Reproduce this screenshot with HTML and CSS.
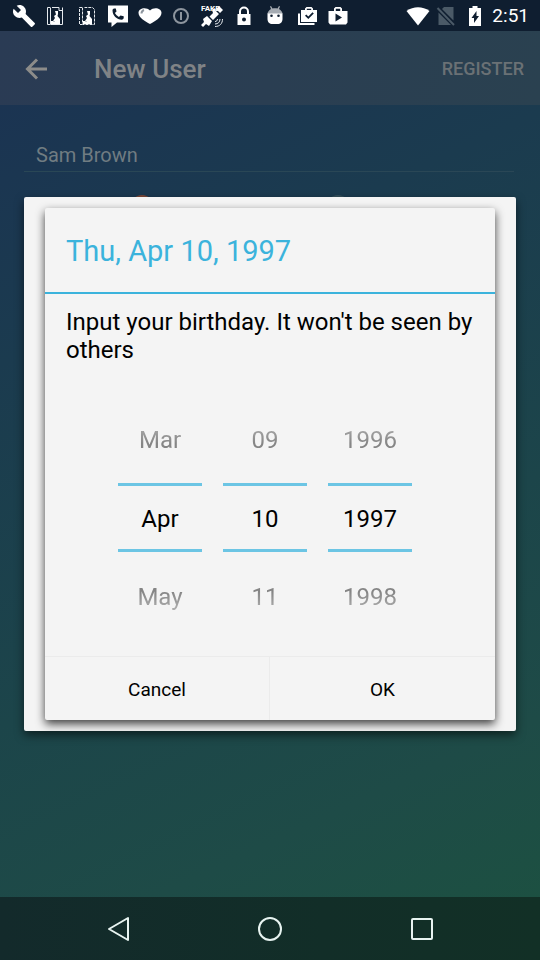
FILE: index.html
```html
<!DOCTYPE html>
<html lang="en">
<head>
<meta charset="utf-8">
<meta name="viewport" content="width=device-width, initial-scale=1">
<title>New User</title>
<link rel="stylesheet" href="styles.css">
</head>
<body>
<div class="screen">
  <div class="status">
    <div class="status-icons">
      <svg viewBox="0 0 24 24"><path d="M22.700 19l-9.100-9.100c.9-2.300.4-5-1.500-6.900-2-2-5-2.400-7.400-1.300L9 6 6 9 1.600 4.700C.4 7.100.9 10.100 2.900 12.100c1.900 1.900 4.600 2.400 6.900 1.500l9.100 9.100c.4.400 1 .4 1.400 0l2.300-2.300c.5-.4.5-1.100.1-1.400z"/></svg>
      <svg viewBox="0 0 24 24"><path class="line" d="M7 3.500H4.500v17H7M7.500 3.500v17h12v-17M9 3.500h7v3h3.500"/><path d="M12 7h3v3l-.5 2L17 15v5H9.500v-2H12l-2-1 2-3-1-2 2-1.500zM8 17h2.500v3H8z"/></svg>
      <svg viewBox="0 0 24 24"><path class="line dash" d="M7 3.500H4.500v17H7M7.500 3.500v17h12v-15l-2-2h-8"/><path d="M12 7h3v3l-.5 2L17 15v5H9.500v-2H12l-2-1 2-3-1-2 2-1.500zM8 17h2.500v3H8z"/></svg>
      <svg viewBox="0 0 24 24"><path fill-rule="evenodd" d="M2 1.500h20v17H11L5.500 23v-4.500H2zM7.800 4.500c-.7.500-1.300 1-1.300 1.800 0 5.200 4.200 9.400 9.400 9.400.7 0 1.300-.8 1.800-1.500v-2l-3.200-.8-1.600 1.600a9 9 0 0 1-4-4L10.500 7.500 9.800 4.500z"/></svg>
      <svg viewBox="0 0 24 24"><path d="M12 20C7 17.500.500 13.500.500 8.800c0-5 8-6.300 11.500-2.300 3.500-4 11.500-2.700 11.500 2.300C23.500 13.500 17 17.500 12 20z"/><path class="grey-line" d="M3.500 9.500c0-2 1-3 2.500-3.500"/></svg>
      <svg viewBox="0 0 24 24"><circle class="grey-line" cx="12" cy="12" r="7"/><path class="grey-line" d="M12 8v8"/></svg>
      <svg viewBox="0 0 24 24"><text class="fake" x="1" y="7">FAKE</text><path d="M16 5l3-3 4 4-3 3zM9.500 12.500l6-6 3.500 3.500-6 6zM3 15l4-3 5 5-3 5-3-2-3 3-2-2 3-3zM12 6l3-2 1 2-3 3z"/><path class="line" d="M15 17.500c1.500 0 2.500-1 2.500-2.500M15 20c3 0 5-2 5-5M15 22.500c5 0 7.500-3 7.500-7.500"/></svg>
      <svg viewBox="0 0 24 24"><path fill-rule="evenodd" d="M5.500 10H7V7.500a5 5 0 0 1 10 0V10h1.500v11h-13zM9 10h6V7.500a3 3 0 0 0-6 0zM12 13.500a2 2 0 1 0 0 4 2 2 0 0 0 0-4z"/></svg>
      <svg viewBox="0 0 24 24"><path class="grey" d="M4.500 10c0-2 1.500-4 3.500-5L7 2.500l1-.5 1.500 2.500c1.500-.5 3.500-.5 5 0L16 2l1 .5L16 5c2 1 3.500 3 3.500 5z"/><path fill-rule="evenodd" d="M4.500 9.500h15V15c0 3-2 5-5 5h-5c-3 0-5-2-5-5zM8.500 10.500a1.300 1.300 0 1 0 0 2.600 1.300 1.300 0 0 0 0-2.600zM15.500 10.500a1.300 1.300 0 1 0 0 2.600 1.300 1.300 0 0 0 0-2.600z"/></svg>
      <svg viewBox="0 0 24 24"><path fill-rule="evenodd" d="M6 6h4V4.500L11.500 3h5L18 4.500V6h4v12H6zM11.800 6h4.400V4.700h-4.400zM10 11.800l3.300 3.300 5.500-5.500-1.300-1.300-4.200 4.200-2-2z"/><path d="M3 9.500h2V19h14.500v2H3z"/></svg>
      <svg viewBox="0 0 24 24"><path fill-rule="evenodd" d="M2.500 7H8V4.500L9.500 3h5L16 4.500V7h5.500v11.500L20 20.500H4l-1.500-2zM9.800 7h4.400V4.800H9.800zM9.500 9.500v8l6.500-4z"/></svg>
    </div>
    <div class="status-right">
      <svg viewBox="0 0 24 24"><path d="M12 21.500L.500 7c7-5 16-5 23 0z"/></svg>
      <svg viewBox="0 0 24 24"><path class="dim" d="M10 3h9.500v13.500L8 5zM4.500 8.500L17 21H4.500z"/><path class="dim-line" d="M3.500 4l16.500 17"/></svg>
      <svg viewBox="0 0 24 24"><path fill-rule="evenodd" d="M9.500 2h5v2H18v18H6V4h3.500zM13.500 7L8.500 14H11v5l5-7h-2.500z"/></svg>
      <span class="clock">2:51</span>
    </div>
  </div>

  <main class="app" inert>
    <header class="appbar">
      <button class="back" type="button" aria-label="Back"><svg viewBox="0 0 24 24"><path d="M23 12H4M13 2.500L3.500 12l9.500 9.500"/></svg></button>
      <h1>New User</h1>
      <button class="register" type="button">REGISTER</button>
    </header>
    <form class="form">
      <input class="name" type="text" aria-label="Name" value="Sam Brown">
      <div class="radios">
        <input class="radio radio-on" type="radio" name="gender" aria-label="Female" checked>
        <input class="radio" type="radio" name="gender" aria-label="Male">
      </div>
    </form>
  </main>

  <div class="overlay">
    <div class="frame">
      <div class="dialog" role="dialog" aria-labelledby="date-title">
        <h2 id="date-title">Thu, Apr 10, 1997</h2>
        <p>Input your birthday. It won't be seen by others</p>
        <div class="picker">
          <div class="wheel">
            <button class="prev" type="button">Mar</button>
            <input type="text" aria-label="Month" value="Apr">
            <button class="next" type="button">May</button>
          </div>
          <div class="wheel">
            <button class="prev" type="button">09</button>
            <input type="text" aria-label="Day" value="10">
            <button class="next" type="button">11</button>
          </div>
          <div class="wheel">
            <button class="prev" type="button">1996</button>
            <input type="text" aria-label="Year" value="1997">
            <button class="next" type="button">1998</button>
          </div>
        </div>
        <div class="actions">
          <button type="button">Cancel</button>
          <button type="button">OK</button>
        </div>
      </div>
    </div>
  </div>

  <nav class="navbar">
    <button type="button" aria-label="Back"><svg viewBox="0 0 28 28"><path d="M24 3v22L5 14z"/></svg></button>
    <button type="button" aria-label="Home"><svg viewBox="0 0 28 28"><circle cx="14" cy="14" r="11"/></svg></button>
    <button type="button" aria-label="Recent apps"><svg viewBox="0 0 28 28"><rect x="4" y="4" width="20" height="20" rx="1"/></svg></button>
  </nav>
</div>
</body>
</html>
```
FILE: styles.css
```css
* {
  box-sizing: border-box;
}

body {
  margin: 0;
  font-family: Roboto, "Liberation Sans", sans-serif;
}

button,
input {
  margin: 0;
  padding: 0;
  border: 0;
  border-radius: 0;
  background: none;
  color: inherit;
  font: inherit;
}

h1,
h2,
p {
  margin: 0;
}

svg {
  display: block;
}

.screen {
  display: grid;
  grid-template-rows: 31px 1fr 63px;
  grid-template-columns: minmax(0, 1fr);
  min-height: 100vh;
  background: linear-gradient(155deg, #1b3153 0%, #1b3b4f 30%, #1c454a 60%, #1e4b47 80%, #1c5240 100%);
}

.status {
  display: flex;
  align-items: center;
  justify-content: space-between;
  padding: 0 11px 0 8px;
  background: #0f1e30;
  color: #fff;
}

.status svg {
  width: 24px;
  height: 24px;
  fill: #fff;
}

.status-icons {
  display: grid;
  grid-template-columns: repeat(11, 1fr);
  justify-items: center;
  flex: 0 1 346px;
}

.status .line {
  fill: none;
  stroke: #e6eaee;
  stroke-width: 1;
}

.status .dash {
  stroke-dasharray: 3 1;
}

.status .grey-line {
  fill: none;
  stroke: #8d959e;
  stroke-width: 2;
}

.status .grey {
  fill: #a5abb2;
}

.status .dim {
  fill: #4b5a67;
}

.status .dim-line {
  fill: none;
  stroke: #4b5a67;
  stroke-width: 2;
}

.fake {
  font-size: 8px;
  font-weight: 700;
}

.status-right {
  display: flex;
  align-items: center;
  gap: 5px;
}

.status-right svg:first-child {
  margin-right: -1px;
}

.clock {
  font-size: 19px;
  line-height: 32px;
}

.app {
  grid-area: 2 / 1;
}

.appbar {
  display: flex;
  align-items: center;
  height: 74px;
  padding: 1px 16px 0 24px;
  background: linear-gradient(100deg, #2a3b54, #2a4150);
  color: #808386;
}

.back svg {
  width: 24px;
  height: 24px;
  fill: none;
  stroke: #8c8c8a;
  stroke-width: 3;
}

.appbar h1 {
  flex: 1;
  margin-left: 46px;
  font-size: 26px;
  font-weight: 500;
  line-height: 32px;
}

.register {
  font-size: 18px;
  font-weight: 500;
  color: #6a7175;
}

.form {
  padding: 34px 26px 0 24px;
}

.name {
  display: block;
  width: 100%;
  height: 33px;
  padding: 0 12px;
  border-bottom: 1px solid #2a4756;
  color: #707c82;
  font-size: 20px;
}

.radios {
  display: grid;
  grid-template-columns: 1fr 1fr;
  justify-items: center;
  padding: 23px 78px 0 20px;
}

.radio {
  appearance: none;
  width: 24px;
  height: 24px;
  border: 2px solid #34505c;
  border-radius: 50%;
}

.radio-on {
  border-color: #7c4838;
}

.overlay {
  grid-area: 2 / 1;
  display: flex;
  align-items: center;
  padding: 0 24px;
}

.frame {
  flex: 1;
  padding: 11px 21px;
  border-radius: 2px;
  background: #f4f4f4;
  box-shadow: 0 4px 10px rgba(0, 0, 0, 0.55);
}

.dialog {
  border-radius: 2px;
  background: #f4f4f4;
  color: #000;
  box-shadow: 0 4px 10px rgba(0, 0, 0, 0.75);
}

.dialog h2 {
  padding: 2px 21px 0;
  border-bottom: 2px solid #3bb3dc;
  color: #3bb3dc;
  font-size: 29px;
  font-weight: 400;
  line-height: 82px;
}

.dialog p {
  padding: 14px 21px 0;
  font-size: 24px;
  line-height: 28px;
}

.picker {
  display: flex;
  justify-content: center;
  gap: 21px;
  padding: 31px 10px 16px 0;
}

.wheel {
  display: flex;
  flex-direction: column;
  width: 84px;
  font-size: 24px;
}

.wheel button {
  height: 88px;
  padding-top: 2px;
  color: #858585;
}

.wheel .prev {
  mask-image: linear-gradient(to top, #000 45%, transparent);
}

.wheel .next {
  mask-image: linear-gradient(to bottom, #000 45%, transparent);
}

.wheel input {
  width: 100%;
  height: 69px;
  padding-top: 2px;
  border-top: 3px solid #6cc5e4;
  border-bottom: 3px solid #6cc5e4;
  text-align: center;
}

.actions {
  display: grid;
  grid-template-columns: 1fr 1fr;
  border-top: 1px solid #ebebeb;
}

.actions button {
  height: 63px;
  padding-top: 2px;
  font-size: 19px;
}

.actions button:first-child {
  border-right: 1px solid #ebebeb;
}

.navbar {
  display: flex;
  align-items: center;
  justify-content: center;
  gap: 96px;
  background: linear-gradient(90deg, #132a2b, #122e28 60%, #123026);
}

.navbar button {
  display: flex;
  justify-content: center;
  width: 56px;
}

.navbar svg {
  width: 28px;
  height: 28px;
  fill: none;
  stroke: #e8f4f1;
  stroke-width: 2;
  stroke-linejoin: round;
}
```
